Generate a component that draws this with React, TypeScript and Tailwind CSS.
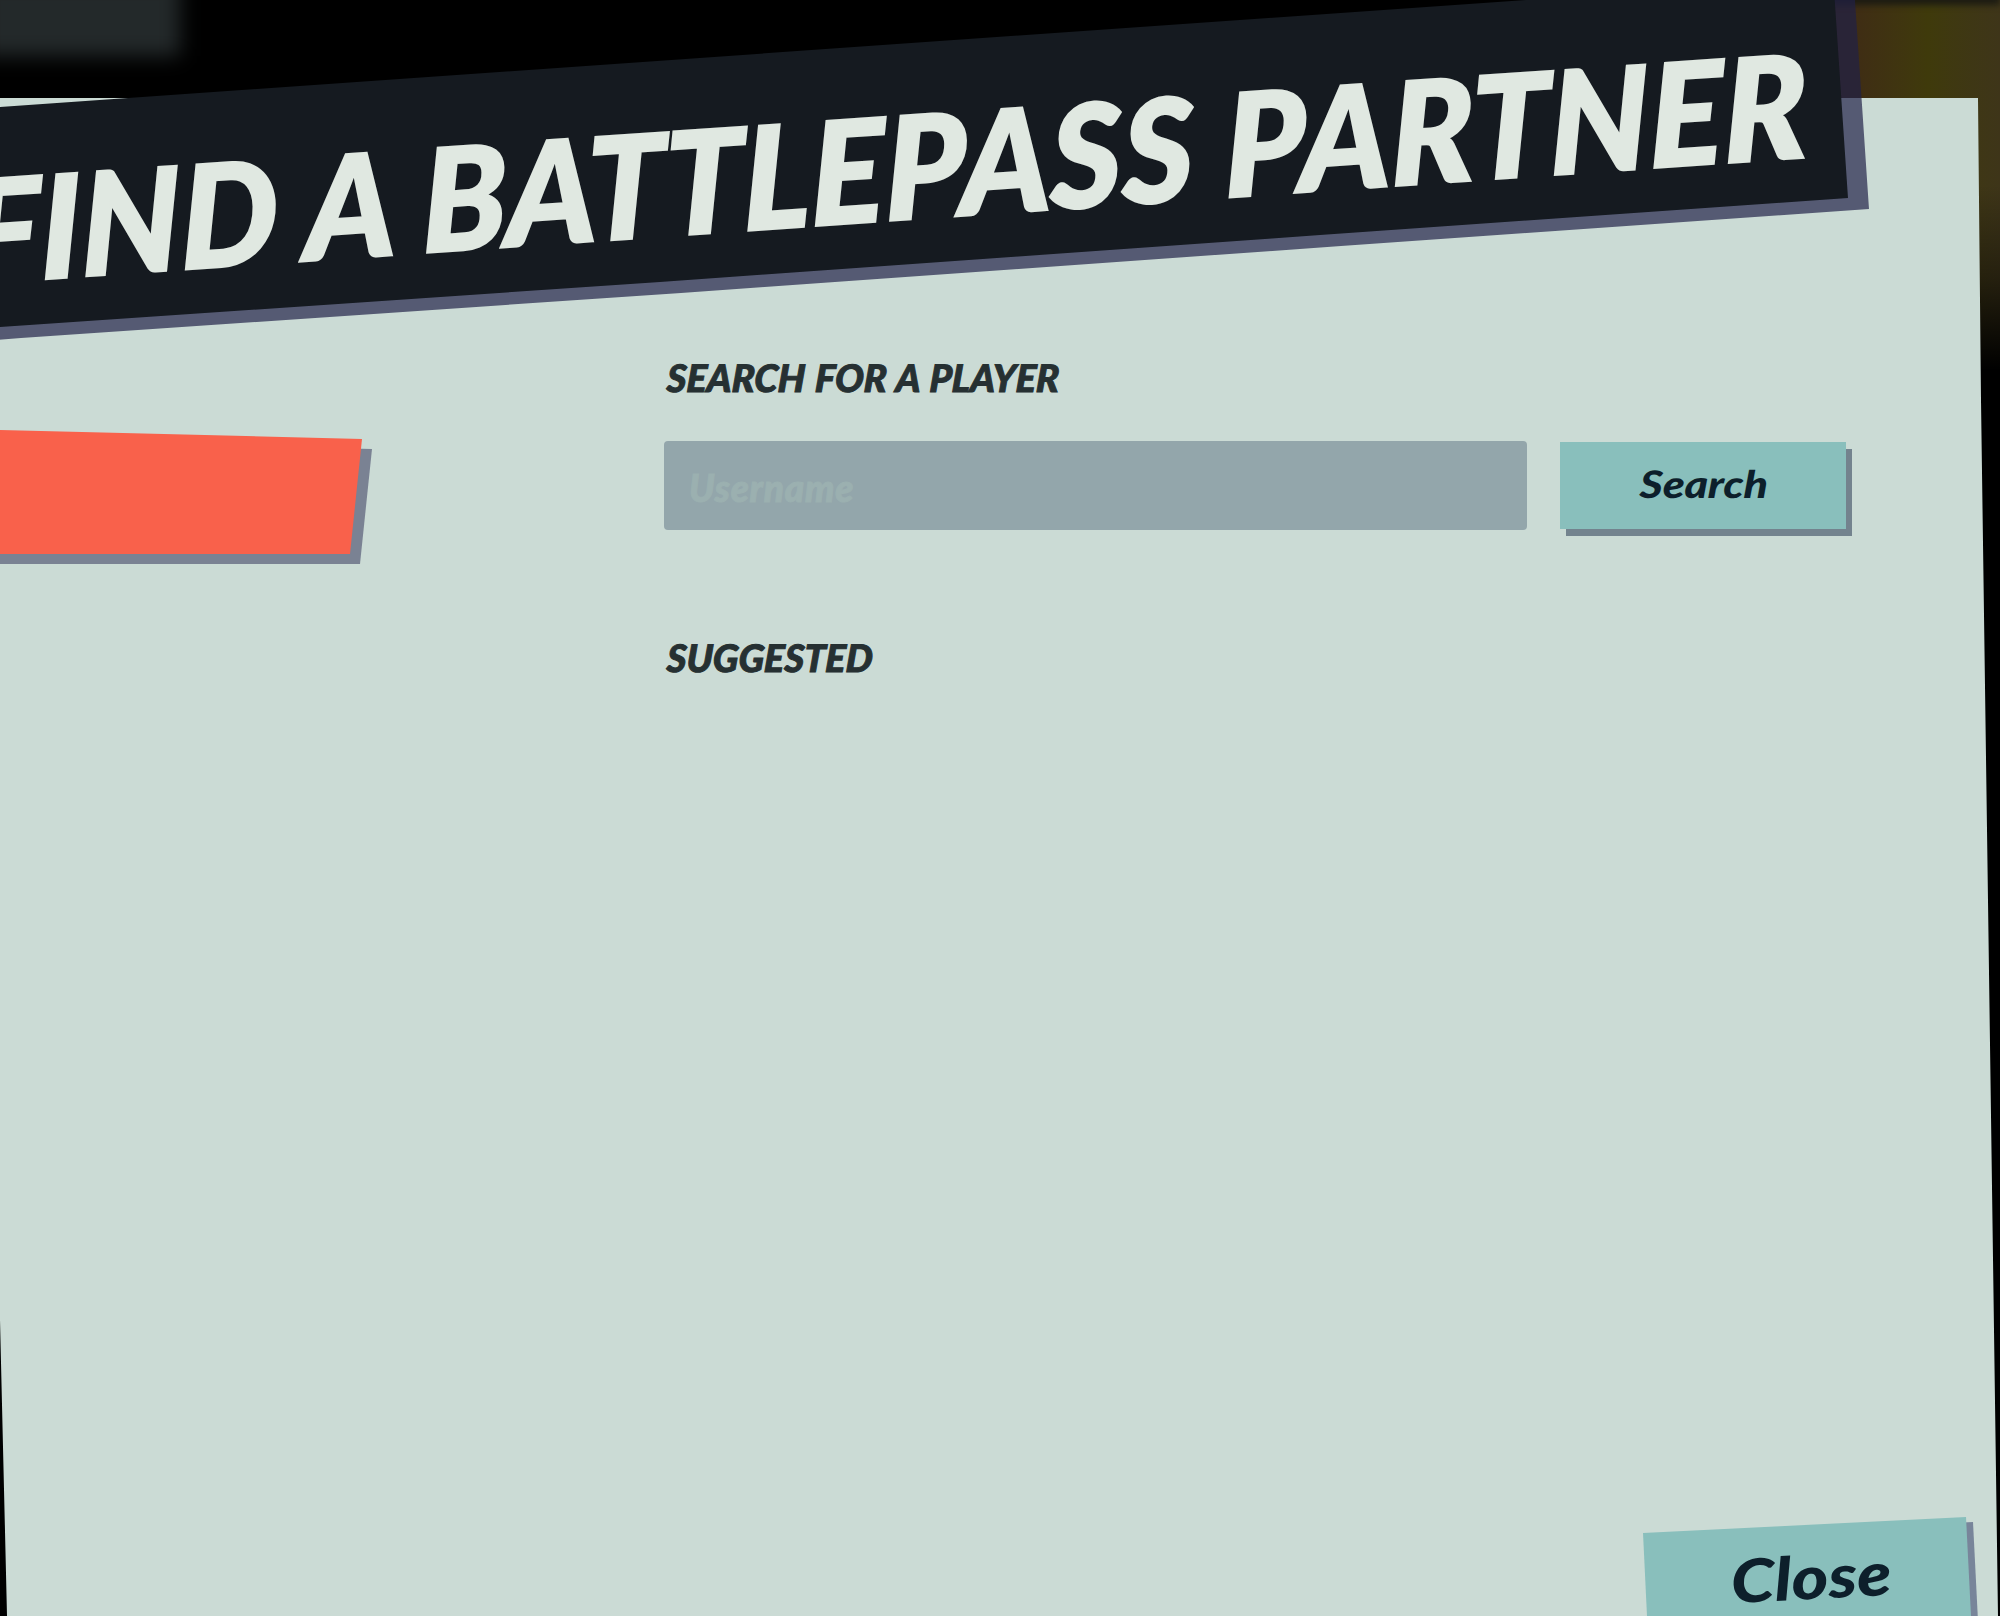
import React, { useState } from 'react';

// Blurred remains of the screen behind the dialog
function Backdrop() {
  return (
    <div className="absolute inset-0 overflow-hidden bg-black">
      <div className="absolute -left-5 -top-5 h-[76px] w-[200px] bg-[#23292a] blur-[10px]" />
      <div className="absolute right-0 top-0 h-[370px] w-[180px] bg-linear-to-r from-[#3f2d14] from-20% via-[#3f3a0b] via-60% to-[#3e3519]">
        <div className="h-full bg-linear-to-b from-transparent from-50% via-black/40 via-75% to-black" />
      </div>
      <div className="absolute right-0 -top-2 h-[13px] w-[180px] bg-[#1c1b12] blur-[3px]" />
    </div>
  );
}

function Banner({ title }: { title: string }) {
  return (
    <div className="absolute -left-10 -top-10 h-[390px] w-[1940px]">
      <div className="h-full drop-shadow-[21px_11px_0_rgba(32,32,71,0.69)]">
        <div className="h-full bg-[#151a20] [clip-path:polygon(0_150px,40px_147px,1566px_40px,1566px_0,1872px_0,1888px_238px,1360px_275px,700px_322px,40px_367px,0_370px)]" />
      </div>
      <h1 className="absolute left-[8px] top-[198px] origin-[0_125px] whitespace-nowrap text-[142px] font-black italic leading-none tracking-[1.2px] text-[#e0e8e1] [-webkit-text-stroke:3px_#e0e8e1] [transform:rotate(-3.95deg)_skewX(-3deg)_scaleX(0.964)]">
        {title}
      </h1>
    </div>
  );
}

function SectionLabel({ children }: { children: React.ReactNode }) {
  return (
    <h2 className="ml-[3px] origin-left whitespace-nowrap text-[38px] font-black italic leading-none text-[#263032] [-webkit-text-stroke:1px_#263032] [transform:scaleX(0.998)_skewX(-3deg)] [word-spacing:2px]">
      {children}
    </h2>
  );
}

export default function App() {
  const [username, setUsername] = useState('');

  return (
    <div className="relative h-[1616px] w-[2000px] overflow-hidden font-['Lato',sans-serif]">
      <Backdrop />

      <div className="relative pt-[98px]">
        <main className="flex h-[1518px] flex-col bg-[#cbdbd5] pt-[260px] [clip-path:polygon(0_0,1978px_0,1981px_302px,1998px_100%,7px_100%,0_1222px)]">
          <div className="grid grid-cols-[664px_1fr]">
            <div className="-ml-5 pt-[72px] drop-shadow-[10px_10px_0_#7a8293]">
              <button className="block h-[124px] w-[382px] bg-[#f9614b] [clip-path:polygon(0_0,20px_0,100%_9px,370px_100%,0_100%)]" />
            </div>

            <div>
              <SectionLabel>SEARCH FOR A PLAYER</SectionLabel>
              <form
                onSubmit={(e) => e.preventDefault()}
                className="mt-[45px] flex gap-[33px]"
              >
                <input
                  type="text"
                  value={username}
                  onChange={(e) => setUsername(e.target.value)}
                  placeholder="Username"
                  className="h-[89px] w-[863px] rounded bg-[#93a6ab] pl-[25px] pt-1 text-[37px] font-black italic tracking-[0.8px] text-[#263032] placeholder:text-[#9bb0b0] placeholder:[-webkit-text-stroke:1px_#9bb0b0]"
                />
                <button
                  type="submit"
                  className="mt-px h-[87px] w-[286px] bg-[#89bfbc] pb-1.5 text-[38px] font-black italic text-[#0d1f2b] shadow-[6px_7px_0_#73838e]"
                >
                  <span className="block [transform:translate(1px,1px)_scaleX(1.17)_skewX(-2deg)]">Search</span>
                </button>
              </form>
              <div className="mt-[108px]">
                <SectionLabel>SUGGESTED</SectionLabel>
              </div>
            </div>
          </div>

          <div className="mt-auto flex justify-end pr-[27px] drop-shadow-[7px_5px_0_#78859a]">
            <button className="h-[99px] w-[330px] bg-[#89bfbc] pt-4 text-[60px] font-black italic leading-none text-[#0d1f2b] [clip-path:polygon(0_16px,323px_0,328px_100%,4px_100%)]">
              <span className="block [transform:translate(3px,1px)_rotate(-3deg)_scaleX(1.17)]">Close</span>
            </button>
          </div>
        </main>
      </div>

      <Banner title="FIND A BATTLEPASS PARTNER" />
    </div>
  );
}
